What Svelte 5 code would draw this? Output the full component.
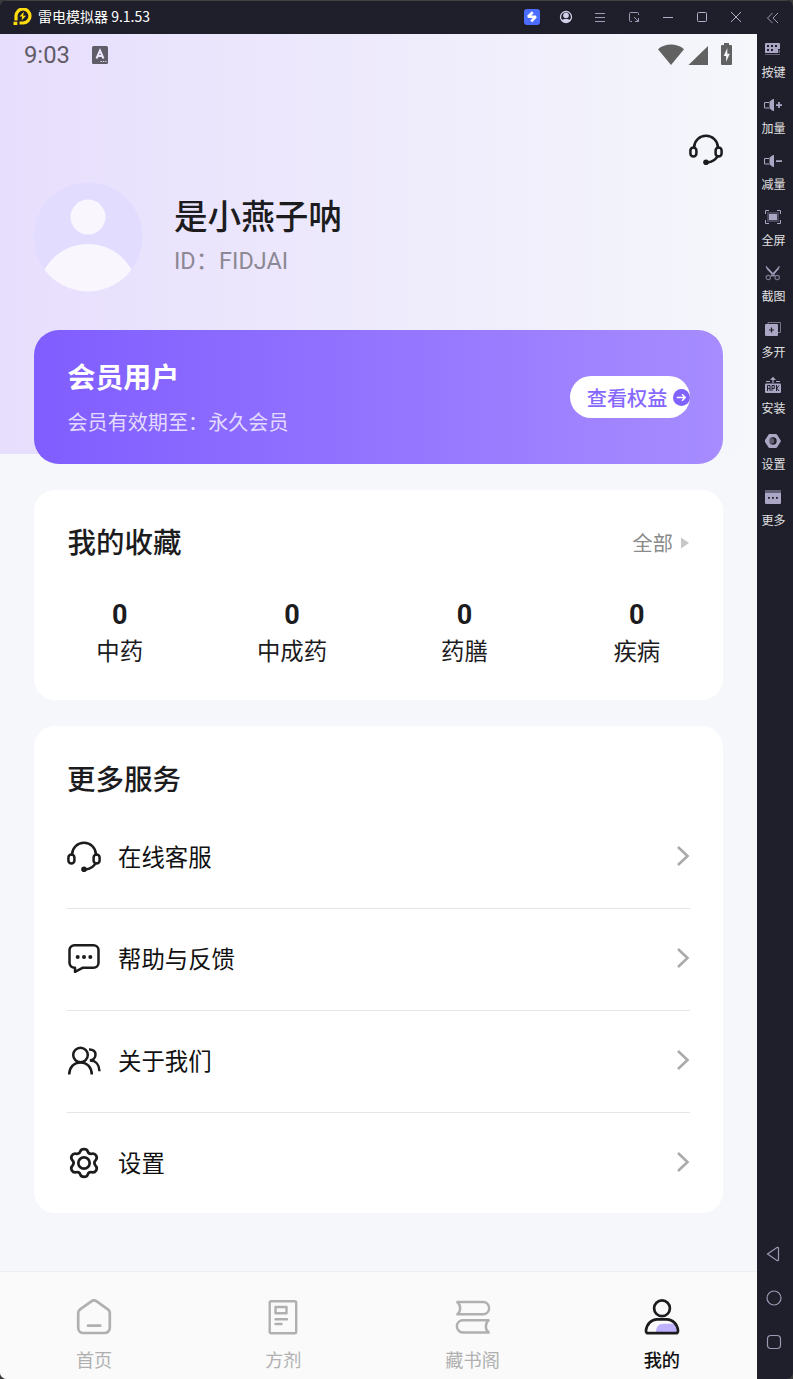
<script>
  let tab = $state('mine');

  const tools = [
    { icon: 'keys', label: '按键' },
    { icon: 'volUp', label: '加量' },
    { icon: 'volDown', label: '减量' },
    { icon: 'full', label: '全屏' },
    { icon: 'cut', label: '截图' },
    { icon: 'multi', label: '多开' },
    { icon: 'apk', label: '安装' },
    { icon: 'nut', label: '设置' },
    { icon: 'dots', label: '更多' },
  ];

  const favorites = [
    { name: '中药', count: 0 },
    { name: '中成药', count: 0 },
    { name: '药膳', count: 0 },
    { name: '疾病', count: 0 },
  ];

  const services = [
    { icon: 'headset', label: '在线客服' },
    { icon: 'chat', label: '帮助与反馈' },
    { icon: 'people', label: '关于我们' },
    { icon: 'gear', label: '设置' },
  ];

  const tabs = [
    { id: 'home', label: '首页' },
    { id: 'recipe', label: '方剂' },
    { id: 'books', label: '藏书阁' },
    { id: 'mine', label: '我的' },
  ];
</script>

{#snippet lineIcon(name)}
  <svg width="34" height="32" viewBox="0 0 34 32" fill="none" stroke="#1c1c1e" stroke-width="2.5" stroke-linecap="round">
    {#if name === 'headset'}
      <path d="M5.2 13.8V13a11.8 11.2 0 0 1 23.6 0v.8" />
      <rect x="1.4" y="13.6" width="6" height="8.8" rx="3" />
      <rect x="26.6" y="13.6" width="6" height="8.8" rx="3" />
      <path d="M28.6 22.2c-2 3.8-5.6 5.7-9.6 6.3" />
      <circle cx="17" cy="28.2" r="2.8" fill="#1c1c1e" stroke="none" />
    {:else if name === 'chat'}
      <path d="M7.5 2.2h19a5 5 0 0 1 5 5v12.6a5 5 0 0 1-5 5H15.5l-7.5 4v-4h-.5a5 5 0 0 1-5-5V7.2a5 5 0 0 1 5-5z" stroke-linejoin="round" />
      <g fill="#1c1c1e" stroke="none"><circle cx="10.7" cy="14" r="2" /><circle cx="17" cy="14" r="2" /><circle cx="23.3" cy="14" r="2" /></g>
    {:else if name === 'people'}
      <circle cx="13.5" cy="10" r="7.3" />
      <path d="M2.2 29.5c0-7 4.500-12.1 11.3-12.1s11.3 5.100 11.300 12.100M22 4.500c4.200-.2 6.500 2 6.500 5 0 3.400-2.400 5.700-5.700 5.900M23 15.600c5.800 0 9.300 4.500 9.500 10.700" stroke-linecap="butt" />
    {:else}
      <g transform="translate(17 16) scale(1.07) translate(-17 -15)">
        <path d="M13.5 4.2c.6-1.700 1.600-2.200 3.500-2.200s2.900.5 3.500 2.200c.6 1.800 2 2.500 3.900 2.100 1.800-.4 3 .1 3.900 1.700 1 1.700 1 2.900-.3 4.200-1.600 1.700-1.600 3.900 0 5.600 1.300 1.300 1.300 2.500.3 4.200-.9 1.600-2.100 2.100-3.900 1.700-1.900-.4-3.300.3-3.900 2.100-.6 1.700-1.600 2.200-3.500 2.200s-2.900-.5-3.500-2.200c-.6-1.800-2-2.500-3.900-2.100-1.800.4-3-.1-3.900-1.700-1-1.700-1-2.900.3-4.200 1.600-1.700 1.600-3.900 0-5.600-1.300-1.300-1.300-2.500-.3-4.200.9-1.600 2.100-2.100 3.900-1.700 1.900.4 3.300-.3 3.900-2.100z" stroke-linejoin="round" />
        <circle cx="17" cy="15" r="5.300" />
      </g>
    {/if}
  </svg>
{/snippet}

{#snippet toolIcon(name)}
  <svg width="18" height="18" viewBox="0 0 18 18" fill="#aaa6c4">
    {#if name === 'keys'}
      <path fill-rule="evenodd" d="M2 3h13a1 1 0 0 1 1 1v5h-2v4H1V4a1 1 0 0 1 1-1zm1 2v2h2V5zm4 0v2h2V5zm4 0v2h2V5zM3 9v2h2V9zm4 0v2h2V9z" />
      <path d="M14.500 10H16v3h-1.500zM1 14h15v1H1z" opacity=".5" />
    {:else if name === 'volUp' || name === 'volDown'}
      <path d="M5.500 5.500 9 3h1v12H9l-3.500-2.500z" />
      <path d="M5 6.500H.5v5.500H5" fill="none" stroke="#aaa6c4" />
      <path d="M12 8.200h6V10h-6z" />
      {#if name === 'volUp'}<path d="M14.100 6h1.800v6h-1.800z" />{/if}
    {:else if name === 'full'}
      <rect x="3" y="4" width="12" height="10" opacity=".3" />
      <path d="M1.500 6V2.500H5M13 2.500h3.500V6M16.500 12v3.500H13M5 15.500H1.500V12" fill="none" stroke="#aaa6c4" />
      <rect x="5" y="6" width="8" height="6" />
    {:else if name === 'cut'}
      <path d="M2 2l9 9.500-1 1L3 5zM15.500 2 7 11.500l1 1L14.500 5z" stroke="#aaa6c4" stroke-width=".5" />
      <g fill="none" stroke="#77748c" stroke-width="1.200"><circle cx="4.300" cy="13.500" r="2.200" /><circle cx="13.200" cy="13.500" r="2.200" /></g>
    {:else if name === 'multi'}
      <path d="M4 4V2.500h12.500v10H14" fill="none" stroke="#77748c" />
      <rect x="1" y="4" width="13" height="12" rx="1" />
      <path d="M7.500 7.500v5M5 10h5" stroke="#1f1f2b" stroke-width="1.200" />
    {:else if name === 'apk'}
      <path d="M8.400 7V3h1.200v4zM6 4l3-3.200L12 4zM2 5h4v1H2zm10 0h4v1h-4z" />
      <rect x="1" y="7.500" width="16" height="9.500" rx="1" />
      <path d="M3.500 15V9.500H6V15M3.500 12.500H6M8 15V9.500h2.300v3H8M12.500 9v6M15 9.500l-2 2.800 2 2.700" fill="none" stroke="#1f1f2b" />
    {:else if name === 'nut'}
      <path fill-rule="evenodd" d="M5 2h6.500a2 2 0 0 1 1.800 1L17 9l-3.700 6a2 2 0 0 1-1.800 1H5L1 10V8zM9 5.300a3.700 3.700 0 1 0 0 7.400 3.700 3.700 0 0 0 0-7.400z" />
      <circle cx="7.500" cy="9" r="2.800" opacity=".45" />
    {:else}
      <path d="M1 2h16v2H1z" opacity=".5" />
      <path fill-rule="evenodd" d="M1 4.500h16V15a1 1 0 0 1-1 1H2a1 1 0 0 1-1-1zM4 9v1.800h1.800V9zm4 0v1.800h1.800V9zm4 0v1.800h1.800V9z" />
    {/if}
  </svg>
{/snippet}

{#snippet tabIcon(id)}
  <svg width="40" height="40" viewBox="0 0 40 40" fill="none" stroke="#b0b0b0" stroke-width="2.700" stroke-linecap="round" stroke-linejoin="round">
    {#if id === 'home'}
      <path d="M17.300 4.300 5.800 12.700a4 4 0 0 0-1.600 3.200V31a5 5 0 0 0 5 5h21.600a5 5 0 0 0 5-5V15.900a4 4 0 0 0-1.600-3.200L22.700 4.300a4.500 4.500 0 0 0-5.400 0zM14 28.700h12.300" />
    {:else if id === 'recipe'}
      <rect x="6.700" y="4.300" width="26.500" height="32" rx="1.500" stroke-width="2.400" />
      <path d="M12.500 10h11v6.300h-11zM12.500 22.300H24M12.500 27h6" stroke-width="2.400" />
    {:else if id === 'books'}
      <path d="M4.300 5h26a5.700 6 0 0 1 0 12.300H4.300c3.800-3.200 3.800-9 0-12.300zM35.700 23.200h-26a5.700 6 0 0 0 0 12.300h26c-3.800-3.200-3.800-9 0-12.300z" stroke-width="2.400" />
    {:else}
      <path d="M14 35.500c0-5.500 2.500-8.700 7.500-8.700h11.200l2.600 8.700z" fill="#c0b1ff" stroke="none" />
      <circle cx="20" cy="11.300" r="7.900" stroke="#1c1c1e" />
      <path d="M6.500 36.200h27c1.800 0 2.700-1 2.500-2.800C35.300 27 30.500 22.300 25 22.300H15C9.500 22.300 4.700 27 4 33.400c-.2 1.800.7 2.800 2.500 2.800z" stroke="#1c1c1e" />
    {/if}
  </svg>
{/snippet}

<div class="window">
  <header class="titlebar">
    <svg width="20" height="18" viewBox="0 0 20 18">
      <path d="M3 12.500V8a7 7 0 1 1 7 7H6.500" fill="none" stroke="#ffdc0a" stroke-width="3.200" />
      <path d="M.5 13.800h3.800V17H.5z" fill="#ffdc0a" />
      <path d="M10.800 3.800 6.500 8.500h2.700l-.6 4L13 7.800h-2.800z" fill="#ffdc0a" />
    </svg>
    <span class="app-name">雷电模拟器 9.1.53</span>
    <div class="controls">
      <svg width="34" height="34" viewBox="0 0 34 34">
        <rect x="9" y="9" width="16" height="16" rx="3" fill="#4b6dff" />
        <path d="M17.800 12.300 13 16.700h7.800l-4.600 4.600" fill="none" stroke="#fff" stroke-width="2.600" stroke-linejoin="bevel" />
      </svg>
      <svg width="34" height="34" viewBox="0 0 34 34">
        <circle cx="17" cy="17" r="5.500" fill="none" stroke="#d3d0ea" stroke-width="1.300" />
        <circle cx="17" cy="15.500" r="2.800" fill="#d3d0ea" />
        <path d="M12.300 20.500c1-2 8.400-2 9.400 0-2.400 3-7 3-9.400 0z" fill="#d3d0ea" />
      </svg>
      <svg width="34" height="34" viewBox="0 0 34 34" stroke="#9d9ab5"><path d="M12 13.500h10M12 17.500h10M12 21.500h10" /></svg>
      <svg width="34" height="34" viewBox="0 0 34 34" fill="none" stroke="#9d9ab5">
        <path d="M15 21.500h-1.500a1 1 0 0 1-1-1v-7a1 1 0 0 1 1-1h7a1 1 0 0 1 1 1V15M17 17l4.500 4.500M21.500 18v3.500H18" />
      </svg>
      <svg width="34" height="34" viewBox="0 0 34 34" stroke="#b2afca"><path d="M12 17.500h10" /></svg>
      <svg width="34" height="34" viewBox="0 0 34 34" fill="none" stroke="#b2afca"><rect x="12.500" y="12.500" width="9" height="9" rx="1" /></svg>
      <svg width="36" height="34" viewBox="0 0 36 34" fill="none" stroke="#b2afca"><path d="m12 12 10 10m0-10L12 22" /></svg>
      <svg width="38" height="34" viewBox="0 0 38 34" fill="none" stroke="#9d9ab5"><path d="m17.500 13-5 5 5 5m5.500-10-5 5 5 5" /></svg>
    </div>
  </header>

  <div class="body">
    <main class="screen">
      <div class="statusbar">
        <span class="clock">9:03</span>
        <svg width="16" height="18" viewBox="0 0 16 18">
          <rect width="16" height="18" rx="1.500" fill="#605c68" />
          <path d="M4.500 12.500 8 4.500l3.500 8M6 10h4" fill="none" stroke="#ece6fa" stroke-width="2" />
          <path d="M8.500 15.500h6" stroke="#ece6fa" stroke-dasharray="1.400 1" />
        </svg>
        <svg class="signals" width="78" height="24" viewBox="0 0 78 24" fill="#616161">
          <path d="M1 6.200c7-6.200 19-6.200 26 0L14 22z" />
          <path d="M51 3v19H31.500z" />
          <path d="M67 0h5v2h2a1 1 0 0 1 1 1v18a1 1 0 0 1-1 1h-9a1 1 0 0 1-1-1V3a1 1 0 0 1 1-1h2z" />
          <path d="m70.300 5-3.600 8h2.400v5.700l3.700-8h-2.500z" fill="#f5f6fb" />
        </svg>
      </div>

      <div class="support">{@render lineIcon('headset')}</div>

      <section class="profile">
        <svg width="110" height="110" viewBox="0 0 110 110">
          <clipPath id="avatar"><circle cx="55" cy="55" r="54.500" /></clipPath>
          <g clip-path="url(#avatar)">
            <rect width="110" height="110" fill="#e2dcff" />
            <circle cx="55" cy="35" r="17.500" fill="#f9f6fe" />
            <circle cx="55" cy="112" r="50" fill="#f9f6fe" />
          </g>
        </svg>
        <div>
          <h1>是小燕子呐</h1>
          <p>ID：FIDJAI</p>
        </div>
      </section>

      <section class="vip">
        <div class="vip-info">
          <h2>会员用户</h2>
          <p>会员有效期至：永久会员</p>
        </div>
        <button class="benefits">
          查看权益
          <svg width="17" height="17" viewBox="0 0 17 17">
            <circle cx="8.500" cy="8.500" r="8.500" fill="#8062ff" />
            <path d="M3.800 8.500h8.400M9 5.300l3.200 3.200L9 11.700" fill="none" stroke="#fff" stroke-width="1.500" />
          </svg>
        </button>
      </section>

      <section class="card favorites">
        <div class="card-head">
          <h3>我的收藏</h3>
          <span class="all">全部
            <svg width="8" height="12" viewBox="0 0 8 12"><path d="M0 .5 8 6l-8 5.500z" fill="#c8c8c8" /></svg>
          </span>
        </div>
        <div class="stats">
          {#each favorites as fav}
            <div class="stat">
              <b>{fav.count}</b>
              <span>{fav.name}</span>
            </div>
          {/each}
        </div>
      </section>

      <section class="card services">
        <h3>更多服务</h3>
        <ul>
          {#each services as item}
            <li>
              {@render lineIcon(item.icon)}
              <span>{item.label}</span>
              <svg width="14" height="22" viewBox="0 0 14 22" fill="none" stroke="#aaa" stroke-width="2.600"><path d="m2 2 9.500 9L2 20" /></svg>
            </li>
          {/each}
        </ul>
      </section>

      <nav class="tabbar">
        {#each tabs as t}
          <button class:active={tab === t.id} onclick={() => tab = t.id}>
            {@render tabIcon(t.id)}
            <span>{t.label}</span>
          </button>
        {/each}
      </nav>
    </main>

    <aside class="toolbar">
      {#each tools as tool}
        <div class="tool">
          {@render toolIcon(tool.icon)}
          <span>{tool.label}</span>
        </div>
      {/each}
      <div class="android-keys">
        <svg width="16" height="16" viewBox="0 0 16 16"><path d="M1.500 8 11 1.500q1.500-.6 1.500 1v11q0 1.500-1.500 1z" /></svg>
        <svg width="16" height="16" viewBox="0 0 16 16"><circle cx="8" cy="8" r="7" /></svg>
        <svg width="16" height="16" viewBox="0 0 16 16"><rect x="1.500" y="1.500" width="13" height="13" rx="3.500" /></svg>
      </div>
    </aside>
  </div>
</div>

<style>
  :global(body) {
    margin: 0;
    background: #3b3b3b;
  }
  h1, h2, h3, p, ul {
    margin: 0;
    padding: 0;
  }
  svg {
    display: block;
    flex: none;
  }
  button {
    border: 0;
    padding: 0;
    background: none;
    font-family: inherit;
    cursor: pointer;
  }
  .window {
    width: 793px;
    height: 1379px;
    display: flex;
    flex-direction: column;
    border-radius: 7px;
    overflow: hidden;
    background: #1f1f2b;
    font-family: Roboto, "Noto Sans CJK SC", sans-serif;
    color: #1c1c1e;
  }
  .titlebar {
    height: 34px;
    box-sizing: border-box;
    flex: none;
    display: flex;
    align-items: center;
    padding: 0 0 2px 13px;
    border-top: 1px solid #41413f;
  }
  .app-name {
    margin-left: 5px;
    color: #fff;
    font-family: "Noto Sans CJK SC", sans-serif;
    font-size: 14px;
    line-height: 20px;
    padding-bottom: 1px;
  }
  .controls {
    display: flex;
    margin-left: auto;
  }
  .body {
    flex: 1;
    min-height: 0;
    display: flex;
  }
  .screen {
    width: 757px;
    display: flex;
    flex-direction: column;
    background: linear-gradient(90deg, #e7defd, #f5f7fb) no-repeat 0 0 / 100% 420px #f5f7fb;
  }
  .statusbar {
    height: 42px;
    box-sizing: border-box;
    display: flex;
    align-items: center;
    padding: 0 22px 1px 24px;
  }
  .clock {
    width: 68px;
    padding-top: 1px;
    font-size: 23.8px;
    color: #605c68;
  }
  .signals {
    margin-left: auto;
  }
  .support {
    display: flex;
    justify-content: flex-end;
    padding: 58px 34px 0 0;
  }
  .profile {
    display: flex;
    align-items: center;
    gap: 31px;
    margin: 16px 33px 0;
  }
  .profile h1 {
    padding-top: 2px;
    font-size: 33.6px;
    line-height: 46px;
    font-weight: 500;
  }
  .profile p {
    font-size: 23.4px;
    line-height: 40px;
    color: #8c8894;
  }
  .vip {
    height: 134px;
    box-sizing: border-box;
    margin: 38px 34px 0 33.5px;
    padding: 0 33.5px 0 34px;
    display: flex;
    align-items: center;
    justify-content: space-between;
    border-radius: 25px;
    background: linear-gradient(90deg, #805dff, #a68cff);
    color: #fff;
  }
  .vip-info {
    padding-top: 7px;
  }
  .vip h2 {
    font-size: 27.9px;
    line-height: 44px;
    font-weight: 700;
  }
  .vip p {
    font-size: 20.1px;
    line-height: 44px;
    color: #e3dbff;
  }
  .benefits {
    width: 120px;
    height: 42px;
    display: flex;
    align-items: center;
    justify-content: flex-end;
    gap: 5px;
    border-radius: 21px;
    background: #fff;
    color: #8768ff;
    font-size: 20.2px;
    font-weight: 500;
    white-space: nowrap;
  }
  .card {
    box-sizing: border-box;
    margin: 26px 34px 0 33.5px;
    padding-top: 34px;
    border-radius: 21px;
    background: #fff;
  }
  .card h3 {
    font-size: 28.5px;
    line-height: 40px;
    font-weight: 500;
  }
  .favorites {
    height: 210px;
  }
  .card-head {
    display: flex;
    justify-content: space-between;
    align-items: center;
    padding: 0 34px;
  }
  .all {
    display: flex;
    align-items: center;
    gap: 8px;
    padding-bottom: 3px;
    font-size: 20.2px;
    color: #8a8a8a;
  }
  .stats {
    display: grid;
    grid-template-columns: repeat(4, 1fr);
    margin-top: 33px;
  }
  .stat {
    display: flex;
    flex-direction: column;
    align-items: center;
    line-height: 36px;
  }
  .stat b {
    font-size: 27px;
    font-weight: 700;
  }
  .stat span {
    padding-top: 1px;
    font-size: 23.4px;
  }
  .services {
    height: 487px;
    padding: 35px 33.5px 0;
  }
  .services ul {
    list-style: none;
    margin-top: 6px;
  }
  .services li {
    height: 102px;
    box-sizing: border-box;
    display: flex;
    align-items: center;
    padding-bottom: 2px;
    border-bottom: 1px solid #e6e6e6;
    font-size: 23.4px;
    color: #111;
  }
  .services li:last-child {
    border-bottom: 0;
  }
  .services li span {
    flex: 1;
    margin-left: 17px;
    padding-bottom: 2px;
  }
  .services li > svg:last-child {
    margin-bottom: 2px;
  }
  .tabbar {
    height: 108px;
    box-sizing: border-box;
    margin-top: auto;
    display: grid;
    grid-template-columns: repeat(4, 1fr);
    border-top: 1px solid #efefef;
    background: #fafafa;
  }
  .tabbar button {
    display: flex;
    flex-direction: column;
    align-items: center;
    padding: 25px 1px 0 0;
    font-size: 18.2px;
    line-height: 26px;
    color: #b0b0b0;
  }
  .tabbar span {
    margin-top: 11px;
  }
  .tabbar .active {
    color: #111;
    font-weight: 500;
  }
  .toolbar {
    width: 36px;
    display: flex;
    flex-direction: column;
    align-items: center;
    padding: 6px 3px 0 0;
    box-sizing: border-box;
  }
  .tool {
    height: 56px;
    display: flex;
    flex-direction: column;
    align-items: center;
  }
  .tool span {
    margin-top: 5px;
    font-family: "Noto Sans CJK SC", sans-serif;
    font-size: 12px;
    line-height: 18px;
    color: #e0e0e0;
    white-space: nowrap;
  }
  .android-keys {
    margin-top: auto;
    padding-bottom: 29px;
    display: flex;
    flex-direction: column;
    gap: 28px;
  }
  .android-keys svg {
    fill: none;
    stroke: #9d9ab5;
    stroke-width: 1.2;
  }
</style>
